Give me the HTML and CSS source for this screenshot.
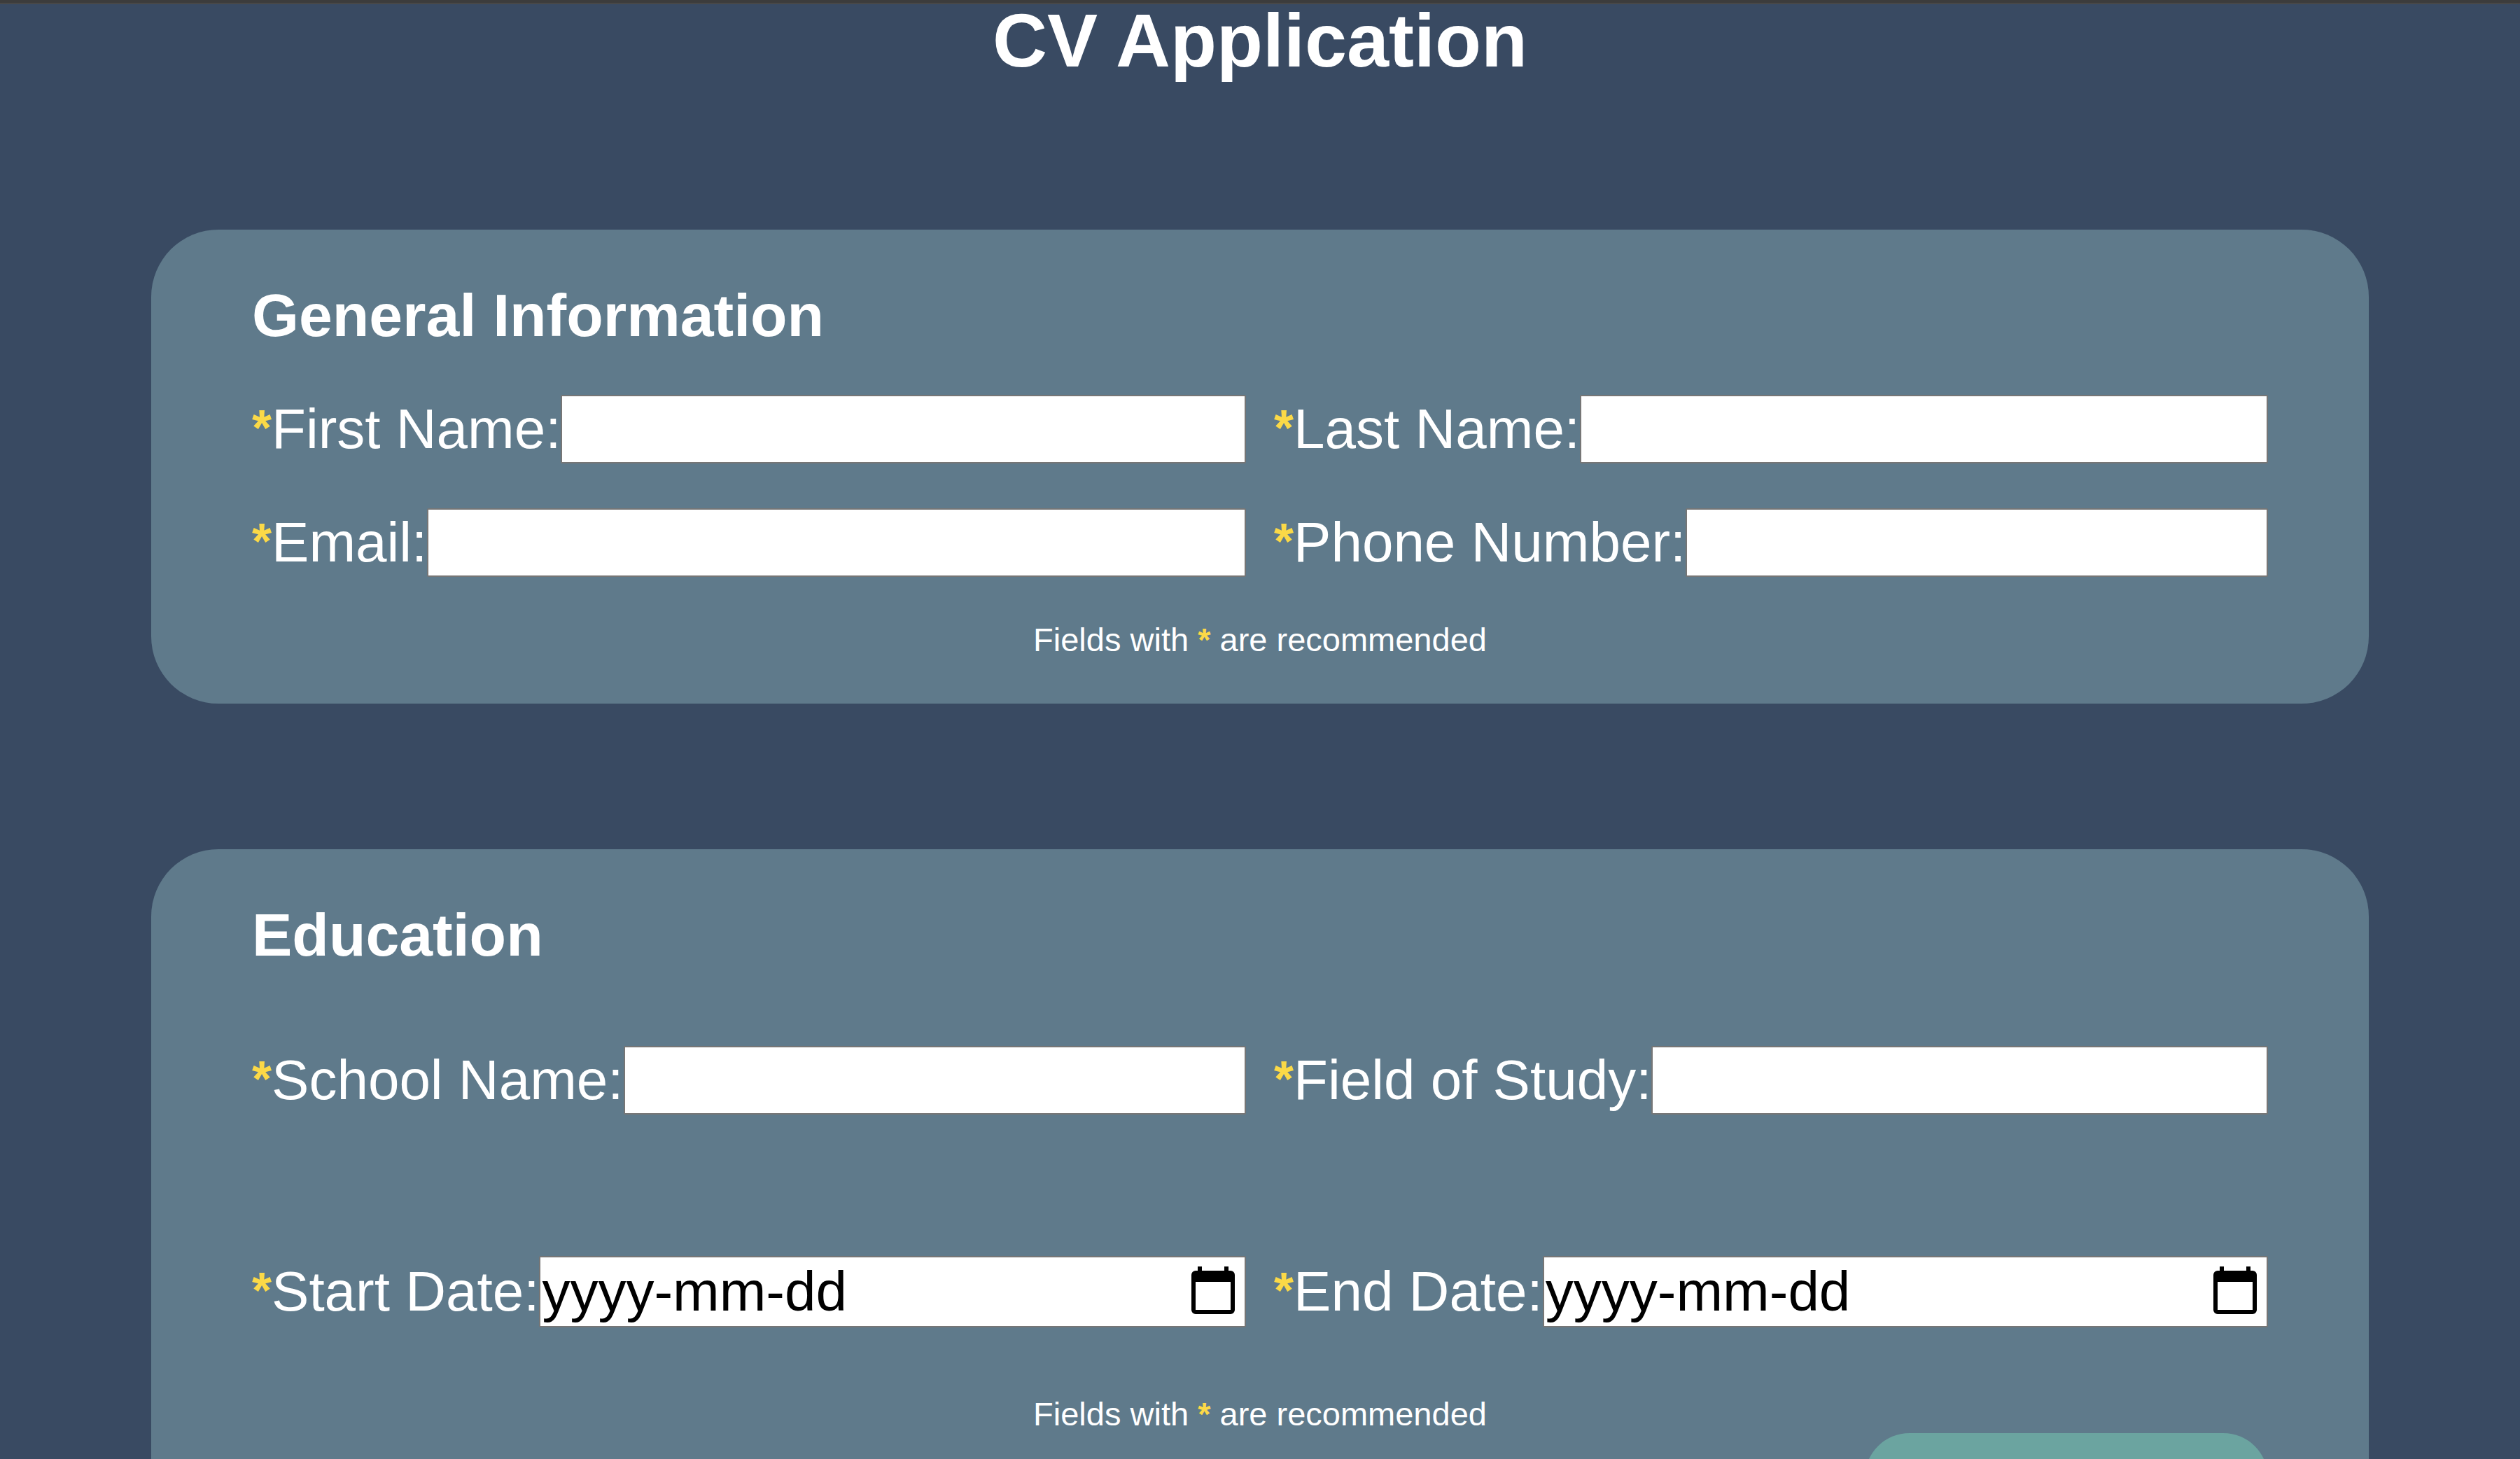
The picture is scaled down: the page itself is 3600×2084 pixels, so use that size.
FILE: index.html
```html
<!DOCTYPE html>
<html lang="en">
<head>
  <meta charset="utf-8">
  <meta name="viewport" content="width=device-width, initial-scale=1">
  <title>CV Application</title>
  <link rel="stylesheet" href="styles.css">
</head>
<body>
  <main class="page">
    <h1 class="page-title">CV Application</h1>

    <form class="sections">
      <section class="card">
        <h2 class="card-title">General Information</h2>
        <div class="fields">
          <div class="field">
            <label class="label" for="first-name"><span class="star">*</span>First Name:</label>
            <input class="input" id="first-name" type="text">
          </div>
          <div class="field">
            <label class="label" for="last-name"><span class="star">*</span>Last Name:</label>
            <input class="input" id="last-name" type="text">
          </div>
          <div class="field">
            <label class="label" for="email"><span class="star">*</span>Email:</label>
            <input class="input" id="email" type="email">
          </div>
          <div class="field">
            <label class="label" for="phone"><span class="star">*</span>Phone Number:</label>
            <input class="input" id="phone" type="tel">
          </div>
        </div>
        <p class="note">Fields with <span class="note-star">*</span> are recommended</p>
      </section>

      <section class="card card-education">
        <h2 class="card-title">Education</h2>
        <div class="fields">
          <div class="field">
            <label class="label" for="school"><span class="star">*</span>School Name:</label>
            <input class="input" id="school" type="text">
          </div>
          <div class="field">
            <label class="label" for="study"><span class="star">*</span>Field of Study:</label>
            <input class="input" id="study" type="text">
          </div>
          <div class="field">
            <label class="label" for="start-date"><span class="star">*</span>Start Date:</label>
            <div class="date-box">
              <input class="date-input" id="start-date" type="text" placeholder="yyyy-mm-dd">
              <button class="date-button" type="button">
                <svg class="calendar" viewBox="0 0 62 68" aria-hidden="true"><path fill-rule="evenodd" d="M9 0h6v6h32V0h6v6h3a6 6 0 0 1 6 6v50a6 6 0 0 1-6 6H6a6 6 0 0 1-6-6V12a6 6 0 0 1 6-6h3zM6 22v40h50V22z"/></svg>
              </button>
            </div>
          </div>
          <div class="field">
            <label class="label" for="end-date"><span class="star">*</span>End Date:</label>
            <div class="date-box">
              <input class="date-input" id="end-date" type="text" placeholder="yyyy-mm-dd">
              <button class="date-button" type="button">
                <svg class="calendar" viewBox="0 0 62 68" aria-hidden="true"><path fill-rule="evenodd" d="M9 0h6v6h32V0h6v6h3a6 6 0 0 1 6 6v50a6 6 0 0 1-6 6H6a6 6 0 0 1-6-6V12a6 6 0 0 1 6-6h3zM6 22v40h50V22z"/></svg>
              </button>
            </div>
          </div>
        </div>
        <p class="note">Fields with <span class="note-star">*</span> are recommended</p>
        <button class="action" type="button"></button>
      </section>
    </form>
  </main>
</body>
</html>
```
FILE: styles.css
```css
* {
  box-sizing: border-box;
}

body {
  margin: 0;
  background: #394a62;
  color: #fff;
  font-family: "Liberation Sans", Helvetica, Arial, sans-serif;
}

.page {
  height: 100vh;
  overflow: hidden;
  border-top: 4px solid #3c3c3c;
  box-shadow: inset 0 2px #484848;
  padding: 2px 6% 0;
}

.page-title {
  margin: 0 0 218px;
  font-size: 108px;
  line-height: 104px;
  text-align: center;
}

.sections {
  display: flex;
  flex-direction: column;
  gap: 208px;
}

.card {
  display: flex;
  flex-direction: column;
  padding: 72px 144px 65px;
  border-radius: 96px;
  background: #5f7a8b;
}

.card-title {
  margin: 0 0 64px;
  font-size: 86px;
  line-height: 100px;
}

.fields {
  display: grid;
  grid-template-columns: 1fr 1fr;
  gap: 64px 40px;
}

.field {
  display: flex;
  align-items: center;
  font-size: 80px;
  line-height: 98px;
}

.label {
  flex: none;
}

.star {
  font-size: 72px;
  line-height: 1;
  vertical-align: 4px;
}

.star,
.note-star {
  color: #fbd947;
  font-weight: bold;
}

.input,
.date-box {
  flex: 1;
  min-width: 0;
  border: 2px solid #767676;
  border-radius: 2px;
  background: #fff;
}

.input {
  height: 98px;
  padding: 2px;
  font: inherit;
}

.date-box {
  display: flex;
  align-items: center;
  padding: 0 14px 0 2px;
}

.date-input {
  flex: 1;
  min-width: 0;
  height: 98px;
  padding: 0;
  border: 0;
  background: none;
  color: #000;
  font: inherit;
}

.date-input::placeholder {
  color: #000;
  opacity: 1;
}

.date-button {
  display: flex;
  padding: 0 0 4px;
  border: 0;
  background: none;
}

.calendar {
  width: 62px;
  height: 68px;
}

.note {
  margin: 64px 0 0;
  font-size: 47px;
  line-height: 52px;
  text-align: center;
}

.card-education .card-title {
  margin-bottom: 109px;
}

.card-education .fields {
  row-gap: 202px;
}

.card-education .note {
  margin-top: 98px;
}

.action {
  align-self: flex-end;
  width: 20%;
  height: 128px;
  margin-top: 1px;
  border: 0;
  border-radius: 64px;
  background: #6ba4a0;
}
```
